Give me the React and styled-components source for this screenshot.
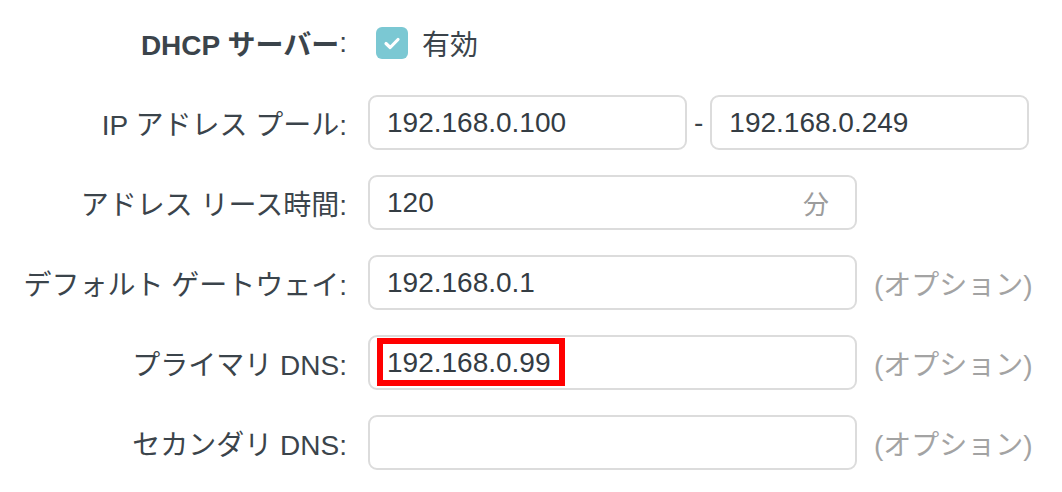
import { Fragment } from "react";
import styled, { createGlobalStyle } from "styled-components";

const GlobalStyle = createGlobalStyle`
  html, body {
    margin: 0;
    padding: 0;
    background: #ffffff;
  }
  body {
    font-family: "Liberation Sans", "Noto Sans CJK JP", sans-serif;
  }
`;

const Form = styled.div`
  display: grid;
  grid-template-columns: 347px 1fr;
  grid-auto-rows: 55px;
  column-gap: 21px;
  row-gap: 25px;
  padding-top: 15px;
`;

const Label = styled.div`
  display: flex;
  align-items: center;
  justify-content: flex-end;
  font-size: 28px;
  color: #3b444b;
  white-space: nowrap;
`;

const Strong = styled.b`
  font-weight: 700;
`;

const Field = styled.div`
  display: flex;
  align-items: center;
`;

const CheckWrap = styled.label`
  display: flex;
  align-items: center;
  gap: 14px;
  margin-left: 8px;
  font-size: 28px;
  color: #3b444b;
`;

const CheckBox = styled.span`
  display: flex;
  align-items: center;
  justify-content: center;
  width: 32px;
  height: 32px;
  border-radius: 6px;
  background: #7bc8d3;
`;

const InputBox = styled.div`
  position: relative;
  box-sizing: border-box;
  display: flex;
  align-items: center;
  width: ${(p) => p.$width}px;
  height: 55px;
  padding: 0 17px;
  border: 2px solid #dcdcdc;
  border-radius: 9px;
  background: #ffffff;
  font-size: 28px;
  color: #343c43;
`;

const Value = styled.span`
  flex: 1;
`;

const Unit = styled.span`
  font-size: 26px;
  color: #9c9c9c;
  margin-right: 9px;
`;

const Dash = styled.span`
  font-size: 28px;
  color: #3b444b;
  margin: 0 7px;
`;

const Hint = styled.span`
  margin-left: 17px;
  font-size: 28px;
  color: #a3a3a3;
  white-space: nowrap;
`;

const Highlight = styled.span`
  position: absolute;
  left: 7px;
  top: 1px;
  width: 188px;
  height: 48px;
  box-sizing: border-box;
  border: 6px solid #ff0000;
  pointer-events: none;
`;

function Check() {
  return (
    <CheckBox>
      <svg width="32" height="32" viewBox="0 0 32 32">
        <path
          d="M10 16.5 L14.2 20.5 L22 12.5"
          fill="none"
          stroke="#ffffff"
          strokeWidth="3.2"
          strokeLinecap="round"
          strokeLinejoin="round"
        />
      </svg>
    </CheckBox>
  );
}

const fields = [
  { label: "アドレス リース時間:", value: "120", unit: "分" },
  { label: "デフォルト ゲートウェイ:", value: "192.168.0.1", hint: true },
  { label: "プライマリ DNS:", value: "192.168.0.99", hint: true, marked: true },
  { label: "セカンダリ DNS:", value: "", hint: true },
];

export default function App() {
  return (
    <>
      <GlobalStyle />
      <Form>
        <Label>
          <Strong>DHCP サーバー</Strong>:
        </Label>
        <Field>
          <CheckWrap>
            <Check />
            有効
          </CheckWrap>
        </Field>

        <Label>IP アドレス プール:</Label>
        <Field>
          <InputBox $width={319}>
            <Value>192.168.0.100</Value>
          </InputBox>
          <Dash>-</Dash>
          <InputBox $width={319}>
            <Value>192.168.0.249</Value>
          </InputBox>
        </Field>

        {fields.map((f) => (
          <Fragment key={f.label}>
            <Label>{f.label}</Label>
            <Field>
              <InputBox $width={489}>
                <Value>{f.value}</Value>
                {f.unit && <Unit>{f.unit}</Unit>}
                {f.marked && <Highlight />}
              </InputBox>
              {f.hint && <Hint>(オプション)</Hint>}
            </Field>
          </Fragment>
        ))}
      </Form>
    </>
  );
}
